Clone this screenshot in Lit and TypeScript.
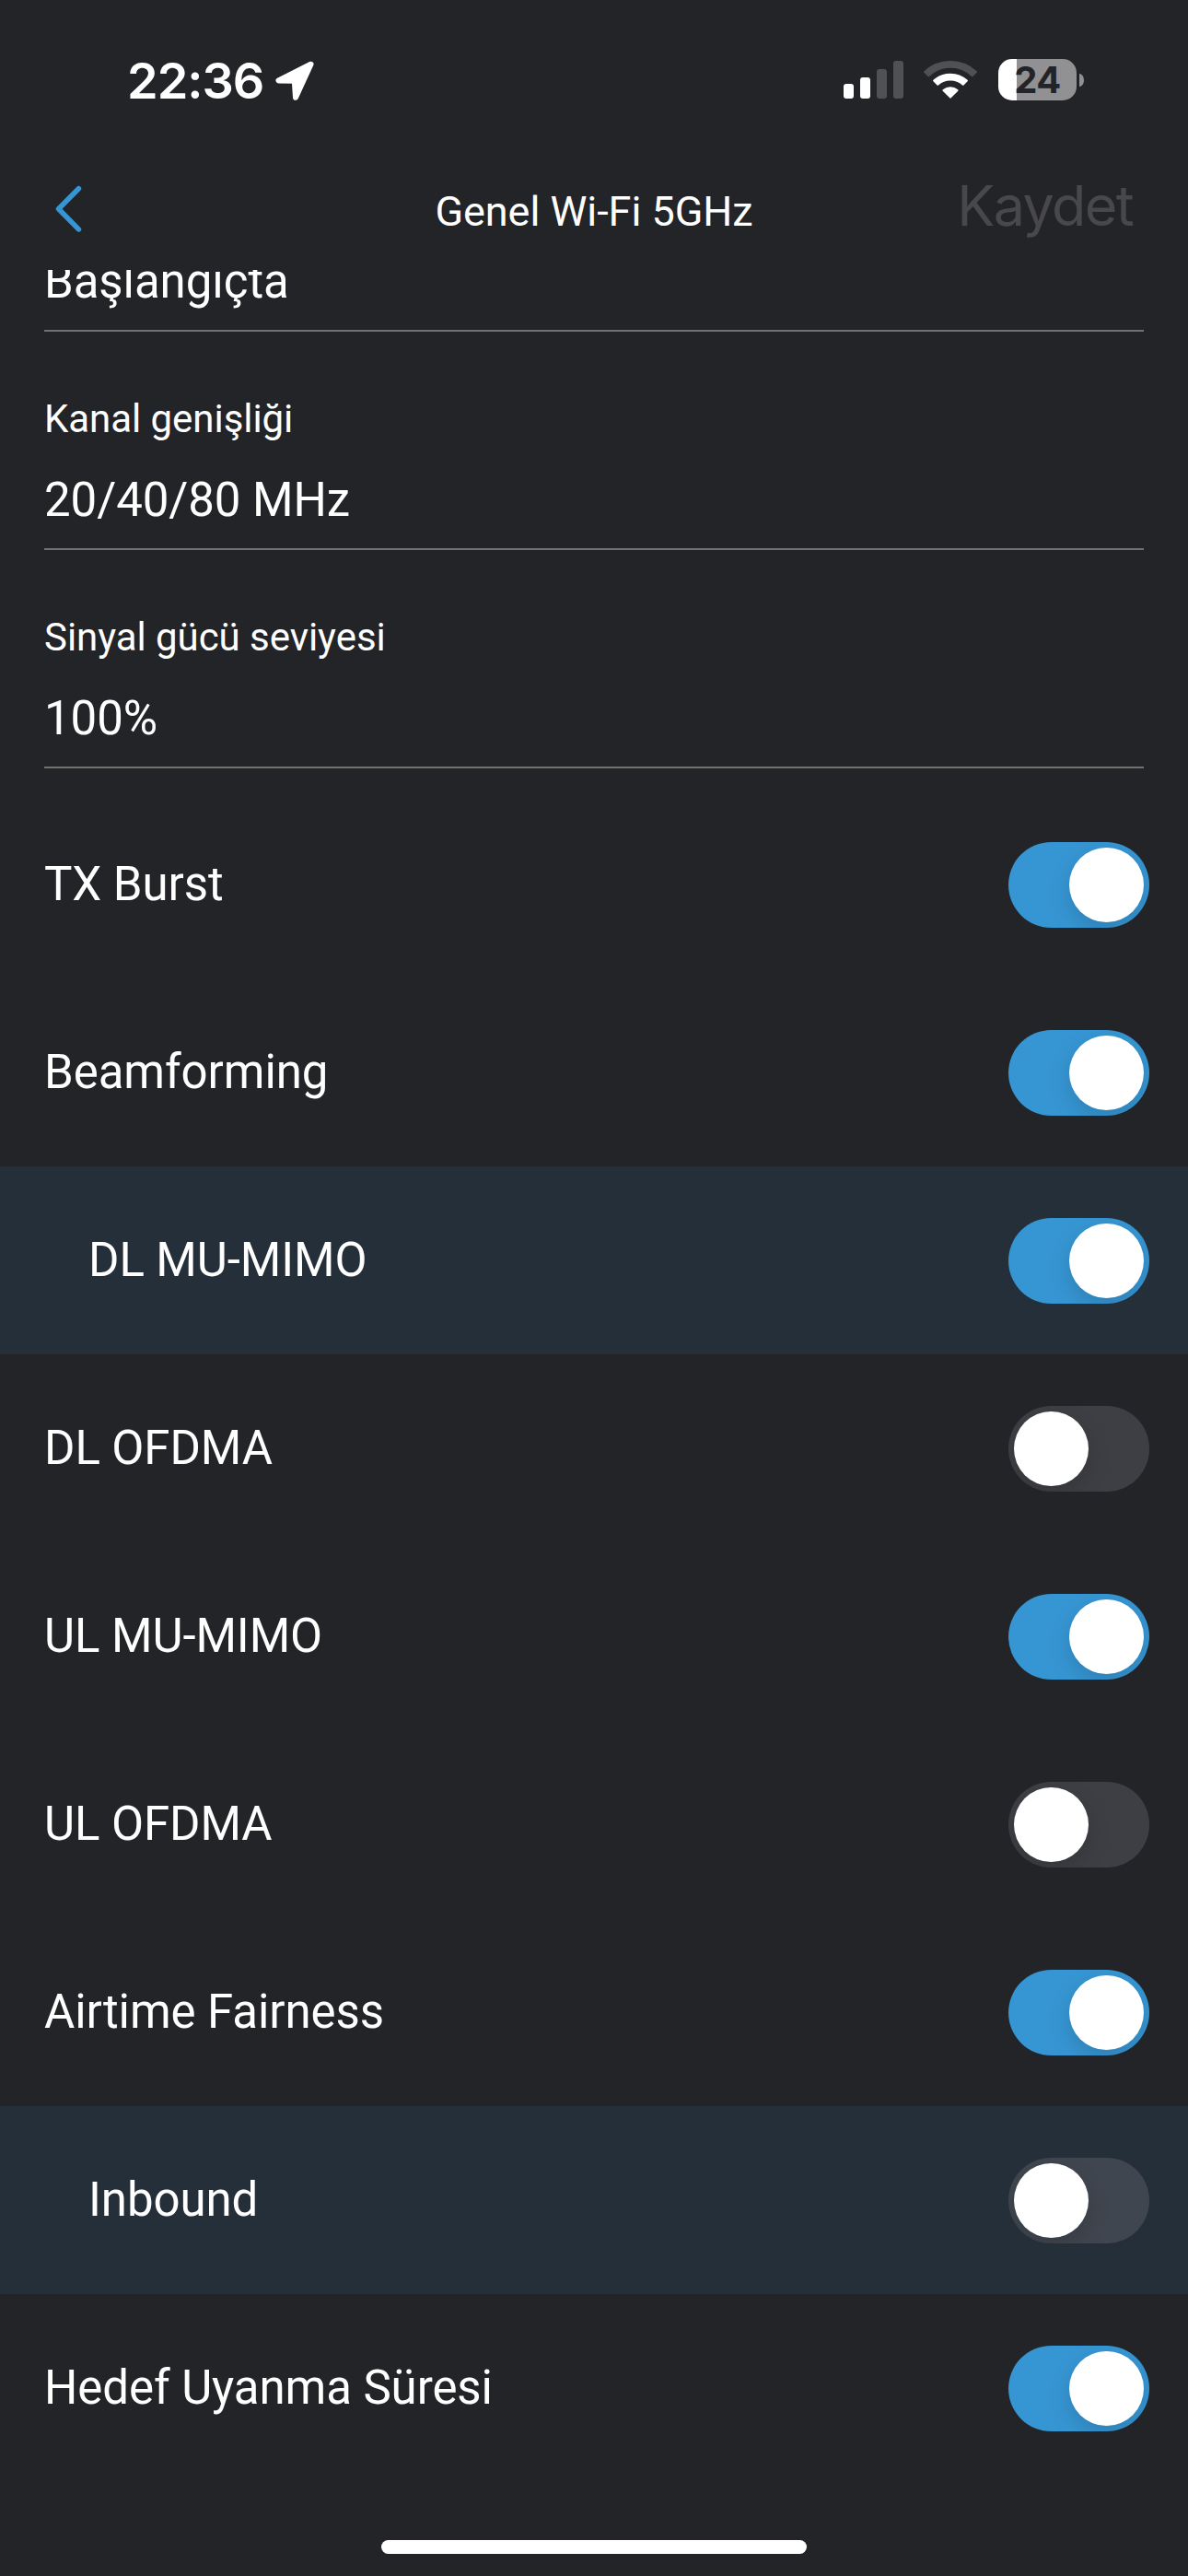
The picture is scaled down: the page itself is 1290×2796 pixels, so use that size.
import { LitElement, html, css, svg } from "lit";
import { customElement, property } from "lit/decorators.js";
import { classMap } from "lit/directives/class-map.js";

interface Field {
  label?: string;
  value: string;
}

interface Option {
  label: string;
  on: boolean;
  nested?: boolean;
}

const FIELDS: Field[] = [
  { value: "Başlangıçta" },
  { label: "Kanal genişliği", value: "20/40/80 MHz" },
  { label: "Sinyal gücü seviyesi", value: "100%" },
];

const OPTIONS: Option[] = [
  { label: "TX Burst", on: true },
  { label: "Beamforming", on: true },
  { label: "DL MU-MIMO", on: true, nested: true },
  { label: "DL OFDMA", on: false },
  { label: "UL MU-MIMO", on: true },
  { label: "UL OFDMA", on: false },
  { label: "Airtime Fairness", on: true },
  { label: "Inbound", on: false, nested: true },
  { label: "Hedef Uyanma Süresi", on: true },
];

@customElement("toggle-switch")
export class ToggleSwitch extends LitElement {
  @property({ type: Boolean }) on = false;

  static styles = css`
    :host {
      display: block;
      flex: none;
    }
    .track {
      box-sizing: border-box;
      display: flex;
      width: 153px;
      height: 93px;
      padding: 6px;
      border-radius: 47px;
      overflow: hidden;
      background: rgba(120, 120, 128, 0.32);
    }
    .track.on {
      justify-content: flex-end;
      background: #3696d3;
    }
    .knob {
      width: 81px;
      height: 81px;
      border-radius: 50%;
      background: #fff;
      box-shadow: 0 9px 24px rgba(0, 0, 0, 0.15);
    }
  `;

  render() {
    return html`<div
      class=${classMap({ track: true, on: this.on })}
      role="switch"
      aria-checked=${this.on ? "true" : "false"}
    >
      <div class="knob"></div>
    </div>`;
  }
}

@customElement("status-bar")
export class StatusBar extends LitElement {
  static styles = css`
    :host {
      display: block;
    }
    .bar {
      box-sizing: border-box;
      display: flex;
      justify-content: space-between;
      height: 167px;
      padding: 55px 113px 0 138px;
      color: #fff;
      font-family: Inter, "Liberation Sans", sans-serif;
    }
    .left,
    .right {
      display: flex;
      align-items: flex-start;
    }
    .time {
      font-size: 54px;
      line-height: 66px;
      font-weight: 600;
      letter-spacing: -1px;
      width: 159px;
      white-space: nowrap;
    }
    .arrow {
      margin-top: 9px;
    }
    .signal {
      margin-top: 11px;
    }
    .wifi {
      margin: 9px 0 0 21px;
    }
    .battery {
      display: flex;
      align-items: center;
      gap: 3px;
      margin: 9px 0 0 22px;
    }
    .cell {
      width: 85px;
      height: 45px;
      border-radius: 15px;
      background: linear-gradient(90deg, #fff 20px, #919193 20px);
      color: #232428;
      font-size: 40px;
      line-height: 45px;
      font-weight: 700;
      letter-spacing: -0.5px;
      text-align: center;
    }
    .cap {
      width: 5px;
      height: 14px;
      border-radius: 0 5px 5px 0 / 0 7px 7px 0;
      background: #919193;
    }
  `;

  render() {
    const bars = [
      [0, 25, 16],
      [18, 18, 23],
      [36, 9, 32],
      [54, 0, 41],
    ];
    return html`<div class="bar">
      <div class="left">
        <span class="time">22:36</span>
        <svg class="arrow" width="48" height="48" viewBox="297 64 48 48">
          <path
            d="M337.5 69.8 302.5 87.4 319.8 87.7 321 105.8Z"
            fill="#fff"
            stroke="#fff"
            stroke-width="6"
            stroke-linejoin="round"
          />
        </svg>
      </div>
      <div class="right">
        <svg class="signal" width="65" height="41">
          ${bars.map(
            ([x, y, h], i) =>
              svg`<rect x=${x} y=${y} width="11" height=${h} rx="3" fill=${i < 2 ? "#fff" : "#505155"} />`
          )}
        </svg>
        <svg class="wifi" width="60" height="45" viewBox="-30 -43 60 45">
          <g stroke-width="2" stroke-linejoin="round">
            <path
              d="M-27.9 -29A40.7 40.7 0 0 1 27.9 -29L23.7 -24.8A34.4 34.4 0 0 0 -23.7 -24.8Z"
              fill="#505155"
              stroke="#505155"
            />
            <path
              d="M-17.9 -19.4A26.7 26.7 0 0 1 17.9 -19.4L13.7 -15.2A20.3 20.3 0 0 0 -13.7 -15.2Z"
              fill="#fff"
              stroke="#fff"
            />
            <path d="M-7.6 -9A12.3 12.3 0 0 1 7.6 -9L0 -1.4Z" fill="#fff" stroke="#fff" />
          </g>
        </svg>
        <div class="battery">
          <div class="cell">24</div>
          <div class="cap"></div>
        </div>
      </div>
    </div>`;
  }
}

@customElement("app-root")
export class AppRoot extends LitElement {
  static styles = css`
    :host {
      display: block;
    }
    .screen {
      display: flex;
      flex-direction: column;
      width: 1290px;
      height: 2796px;
      overflow: hidden;
      background: #232428;
      color: #fff;
      font-family: Roboto, "Liberation Sans", sans-serif;
    }
    .nav {
      box-sizing: border-box;
      display: grid;
      grid-template-columns: 1fr auto 1fr;
      height: 126px;
      flex: none;
      padding: 0 60px;
    }
    .back {
      margin-top: 34px;
    }
    .title {
      margin: 36px 0 0;
      font-size: 45px;
      line-height: 54px;
      font-weight: 400;
      letter-spacing: -0.05px;
      white-space: nowrap;
    }
    .save {
      margin-top: 19px;
      justify-self: end;
      font-family: Inter, "Liberation Sans", sans-serif;
      font-size: 61px;
      line-height: 74px;
      letter-spacing: -1.6px;
      color: #48484c;
    }
    .content {
      flex: 1;
      min-height: 0;
      overflow: hidden;
    }
    .fields {
      margin: -17px 48px 24px;
    }
    .field {
      display: flex;
      flex-direction: column;
      gap: 33px;
      padding: 70px 0 22px;
      border-bottom: 2px solid #71726f;
    }
    .field:first-child {
      padding-top: 0;
    }
    .label {
      font-size: 42px;
      line-height: 50px;
      letter-spacing: -0.05px;
    }
    .value,
    .name {
      font-size: 51px;
      line-height: 60px;
      letter-spacing: -0.08px;
    }
    .option {
      box-sizing: border-box;
      display: flex;
      align-items: flex-start;
      justify-content: space-between;
      height: 204px;
      padding: 56px 42px 0 48px;
    }
    .option.nested {
      padding-left: 96px;
      background: #252f39;
    }
    .name {
      margin-top: 16px;
    }
    .home {
      flex: none;
      width: 462px;
      height: 15px;
      margin: 0 auto 24px;
      border-radius: 8px;
      background: #fff;
    }
  `;

  render() {
    return html`<div class="screen">
      <status-bar></status-bar>
      <header class="nav">
        <svg class="back" width="30" height="52" viewBox="60 201 30 52">
          <path
            d="M85.4 204.7 63.6 226.7 85.4 248.9"
            fill="none"
            stroke="#3696d3"
            stroke-width="5.6"
            stroke-linecap="round"
            stroke-linejoin="round"
          />
        </svg>
        <h1 class="title">Genel Wi-Fi 5GHz</h1>
        <span class="save">Kaydet</span>
      </header>
      <main class="content">
        <section class="fields">
          ${FIELDS.map(
            (f) => html`<div class="field">
              ${f.label ? html`<span class="label">${f.label}</span>` : null}
              <span class="value">${f.value}</span>
            </div>`
          )}
        </section>
        ${OPTIONS.map(
          (o) => html`<div class=${classMap({ option: true, nested: !!o.nested })}>
            <span class="name">${o.label}</span>
            <toggle-switch ?on=${o.on}></toggle-switch>
          </div>`
        )}
      </main>
      <div class="home"></div>
    </div>`;
  }
}
